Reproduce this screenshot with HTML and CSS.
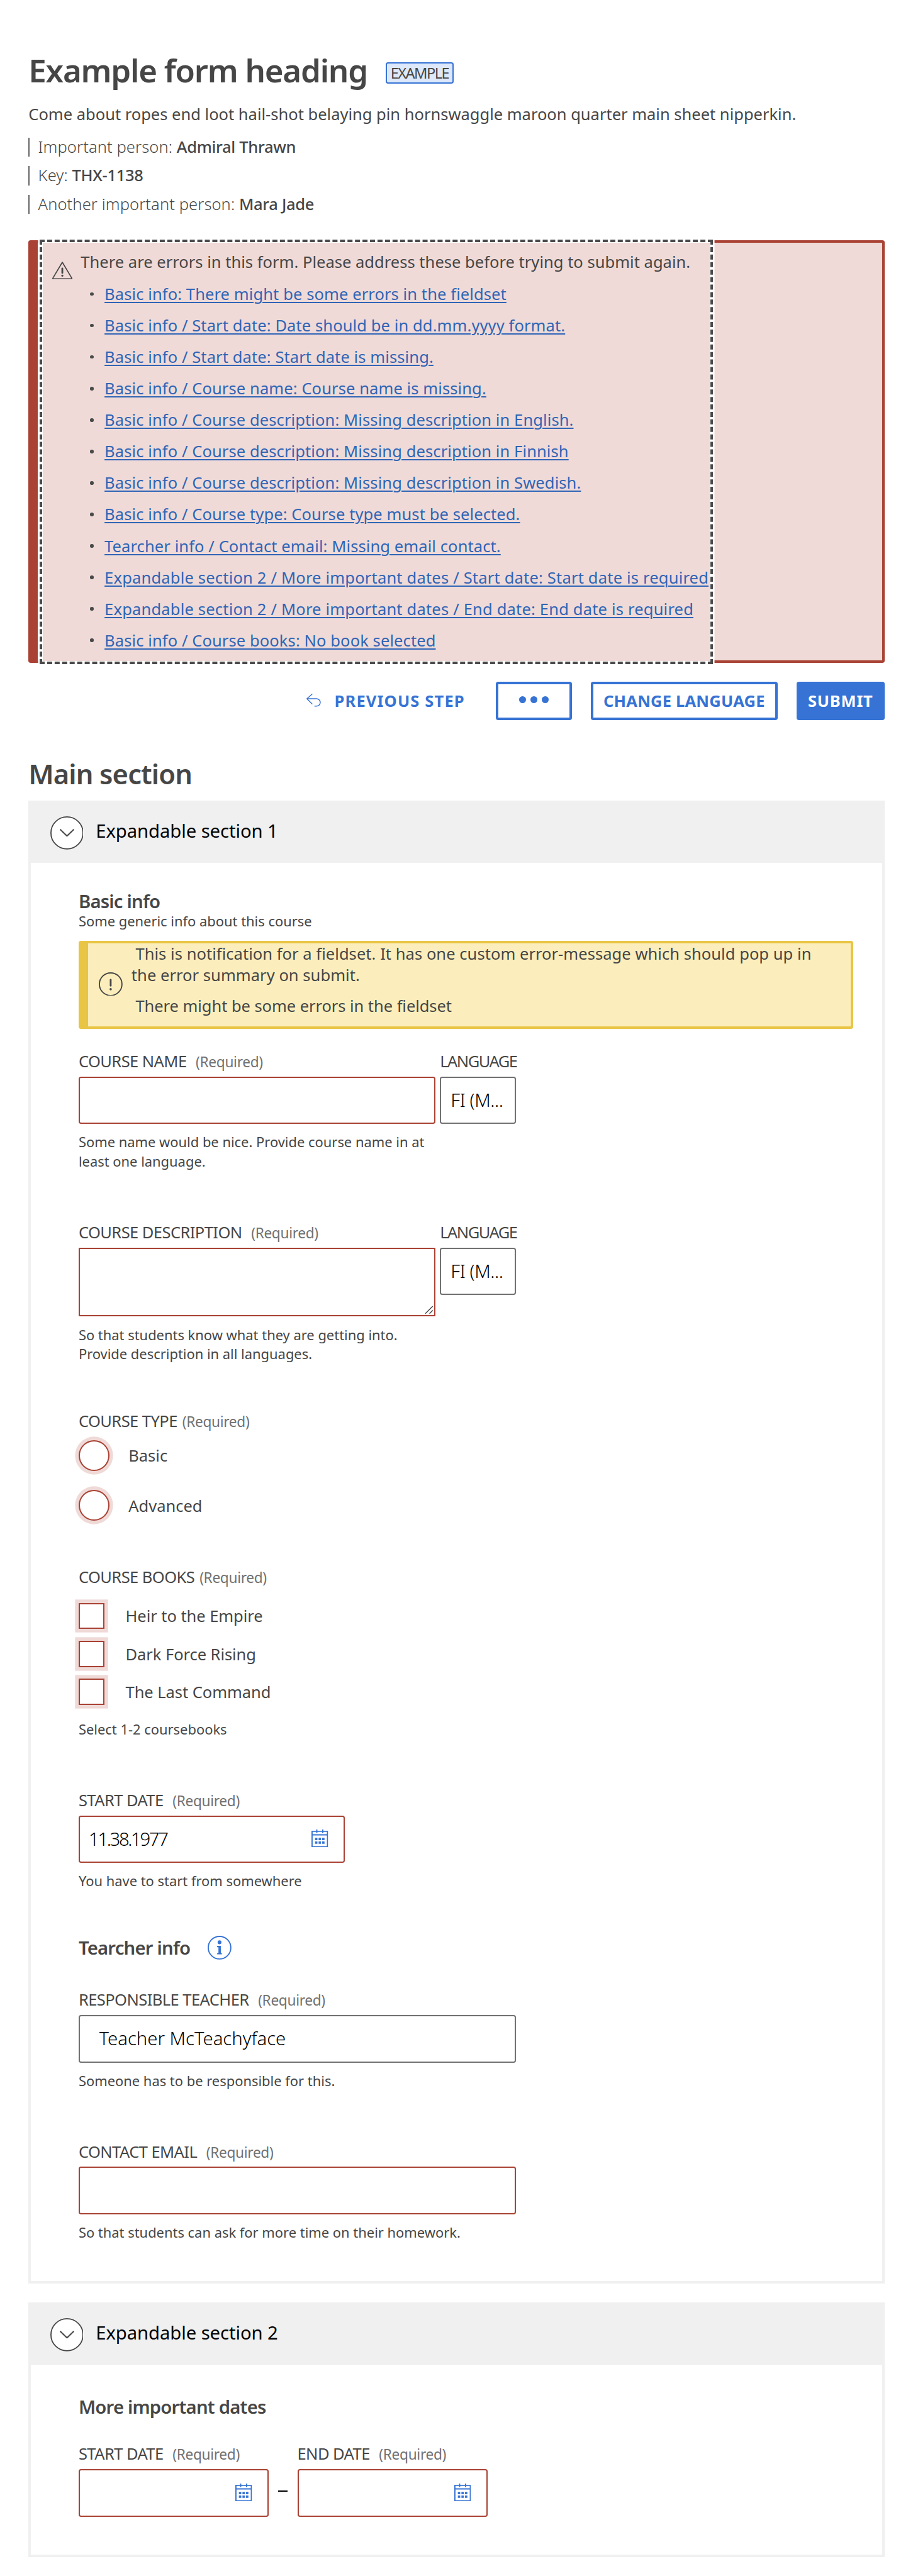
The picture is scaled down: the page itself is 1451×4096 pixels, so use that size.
FILE: index.html
```html
<!DOCTYPE html>
<html lang="en">
<head>
<meta charset="utf-8">
<title>Example form heading</title>
<link rel="stylesheet" href="styles.css">
</head>
<body>
<svg class="sprite" aria-hidden="true">
  <symbol id="calendar" viewBox="0 0 28 30">
    <path d="M1 3h26v26H1zM1 9h26" fill="none" stroke="currentColor" stroke-width="2"/>
    <path d="M9 0v6M19 0v6" fill="none" stroke="currentColor" stroke-width="2"/>
    <path d="M6 14h4v4H6zM12 14h4v4h-4zM18 14h4v4h-4zM6 20h4v4H6zM12 20h4v4h-4zM18 20h4v4h-4z" fill="currentColor"/>
  </symbol>
  <symbol id="chevron" viewBox="0 0 56 56">
    <circle cx="28" cy="28" r="27" fill="#fff" stroke="currentColor" stroke-width="1.9"/>
    <path d="M17 22.5l11 10.5 11-10.5" fill="none" stroke="currentColor" stroke-width="2.2" stroke-linecap="round" stroke-linejoin="round"/>
  </symbol>
</svg>
<main class="page">
  <header class="title-row">
    <h1 class="title">Example form heading</h1>
    <span class="tag">EXAMPLE</span>
  </header>
  <p class="lead">Come about ropes end loot hail-shot belaying pin hornswaggle maroon quarter main sheet nipperkin.</p>
  <ul class="meta">
    <li class="meta-item">Important person: <b class="meta-value">Admiral Thrawn</b></li>
    <li class="meta-item">Key: <b class="meta-value">THX-1138</b></li>
    <li class="meta-item">Another important person: <b class="meta-value">Mara Jade</b></li>
  </ul>

  <section class="errors">
    <div class="errors-focus">
      <svg class="errors-icon" viewBox="0 0 34 30"><path d="M17 1L33 28q.3 1-.8 1H1.800q-1.100 0-.8-1z" fill="none" stroke="currentColor" stroke-width="1.800" stroke-linejoin="round"/><path d="M17 11.500v7.500" stroke="currentColor" stroke-width="3" stroke-linecap="round"/><circle cx="17" cy="23.600" r="1.700" fill="currentColor"/></svg>
      <div class="errors-body">
        <p class="errors-title">There are errors in this form. Please address these before trying to submit again.</p>
        <ul class="errors-list">
          <li><a class="link" href="#">Basic info: There might be some errors in the fieldset</a></li>
          <li><a class="link" href="#">Basic info / Start date: Date should be in dd.mm.yyyy format.</a></li>
          <li><a class="link" href="#">Basic info / Start date: Start date is missing.</a></li>
          <li><a class="link" href="#">Basic info / Course name: Course name is missing.</a></li>
          <li><a class="link" href="#">Basic info / Course description: Missing description in English.</a></li>
          <li><a class="link" href="#">Basic info / Course description: Missing description in Finnish</a></li>
          <li><a class="link" href="#">Basic info / Course description: Missing description in Swedish.</a></li>
          <li><a class="link" href="#">Basic info / Course type: Course type must be selected.</a></li>
          <li><a class="link" href="#">Tearcher info / Contact email: Missing email contact.</a></li>
          <li><a class="link link-long" href="#">Expandable section 2 / More important dates / Start date: Start date is required</a></li>
          <li><a class="link link-long" href="#">Expandable section 2 / More important dates / End date: End date is required</a></li>
          <li><a class="link" href="#">Basic info / Course books: No book selected</a></li>
        </ul>
      </div>
    </div>
  </section>

  <div class="actions">
    <a class="back" href="#"><svg class="back-icon" viewBox="0 0 24 22"><path d="M9.500 .8L.8 8.500l8.700 8.700M.8 8.500H17a6.200 6.200 0 0 1 0 12.500h-3" fill="none" stroke="currentColor" stroke-width="1.500" stroke-linecap="round"/></svg>PREVIOUS STEP</a>
    <button class="btn btn-more" type="button"><i class="dot"></i><i class="dot"></i><i class="dot"></i></button>
    <button class="btn btn-lang" type="button">CHANGE LANGUAGE</button>
    <button class="btn btn-submit" type="button">SUBMIT</button>
  </div>

  <h2 class="section-title">Main section</h2>

  <section class="panel">
    <header class="panel-head"><svg class="panel-icon"><use href="#chevron"/></svg><h3 class="panel-title">Expandable section 1</h3></header>
    <div class="panel-body">
      <h4 class="legend">Basic info</h4>
      <p class="legend-note">Some generic info about this course</p>
      <div class="notice">
        <svg class="notice-icon" viewBox="0 0 40 40"><circle cx="20" cy="20" r="19" fill="none" stroke="currentColor" stroke-width="2"/><path d="M20 12.500v10" stroke="currentColor" stroke-width="3" stroke-linecap="round"/><circle cx="20" cy="28.500" r="1.900" fill="currentColor"/></svg>
        <div class="notice-body">
          <p class="notice-text">This is notification for a fieldset. It has one custom error-message which should pop up in the error summary on submit.</p>
          <p class="notice-text">There might be some errors in the fieldset</p>
        </div>
      </div>

      <div class="field field-name">
        <div class="col-main">
          <label class="label">COURSE NAME <span class="req">(Required)</span></label>
          <input class="input invalid" type="text">
          <p class="hint">Some name would be nice. Provide course name in at least one language.</p>
        </div>
        <div class="col-lang">
          <label class="label">LANGUAGE</label>
          <div class="select">FI (M...</div>
        </div>
      </div>

      <div class="field field-description">
        <div class="col-main">
          <label class="label">COURSE DESCRIPTION <span class="req">(Required)</span></label>
          <div class="textarea"><svg class="grip" viewBox="0 0 14 14"><path d="M1 13.500L13.500 1M8 13.500l5.500-5.500" stroke="currentColor" stroke-width="1.500" fill="none"/></svg></div>
          <p class="hint">So that students know what they are getting into. Provide description in all languages.</p>
        </div>
        <div class="col-lang">
          <label class="label">LANGUAGE</label>
          <div class="select">FI (M...</div>
        </div>
      </div>

      <div class="group group-type">
        <p class="label tight">COURSE TYPE <span class="req">(Required)</span></p>
        <label class="radio"><i class="radio-mark"></i>Basic</label>
        <label class="radio"><i class="radio-mark"></i>Advanced</label>
      </div>

      <div class="group group-books">
        <p class="label tight">COURSE BOOKS <span class="req">(Required)</span></p>
        <label class="check"><i class="check-mark"></i>Heir to the Empire</label>
        <label class="check"><i class="check-mark"></i>Dark Force Rising</label>
        <label class="check"><i class="check-mark"></i>The Last Command</label>
        <p class="hint">Select 1-2 coursebooks</p>
      </div>

      <div class="stack">
        <label class="label">START DATE <span class="req">(Required)</span></label>
        <div class="input date invalid"><span class="date-value">11.38.1977</span><svg class="calendar"><use href="#calendar"/></svg></div>
        <p class="hint">You have to start from somewhere</p>
      </div>

      <div class="legend-row">
        <h4 class="legend">Tearcher info</h4>
        <svg class="info" viewBox="0 0 40 40"><circle cx="20" cy="20" r="19" fill="none" stroke="currentColor" stroke-width="2"/><circle cx="20" cy="11" r="3.200" fill="currentColor"/><path d="M16 17h6.200v12H24v2.200h-8V29h2.200v-9.800H16z" fill="currentColor"/></svg>
      </div>

      <div class="stack stack-first">
        <label class="label">RESPONSIBLE TEACHER <span class="req">(Required)</span></label>
        <input class="input wide teacher" type="text" value="Teacher McTeachyface">
        <p class="hint">Someone has to be responsible for this.</p>
      </div>
      <div class="stack">
        <label class="label">CONTACT EMAIL <span class="req">(Required)</span></label>
        <input class="input wide invalid" type="text">
        <p class="hint">So that students can ask for more time on their homework.</p>
      </div>
    </div>
  </section>

  <section class="panel panel-second">
    <header class="panel-head"><svg class="panel-icon"><use href="#chevron"/></svg><h3 class="panel-title">Expandable section 2</h3></header>
    <div class="panel-body">
      <h4 class="legend">More important dates</h4>
      <div class="range">
        <div>
          <label class="label">START DATE <span class="req">(Required)</span></label>
          <div class="input date short invalid"><svg class="calendar"><use href="#calendar"/></svg></div>
        </div>
        <span class="range-dash"></span>
        <div>
          <label class="label">END DATE <span class="req">(Required)</span></label>
          <div class="input date short invalid"><svg class="calendar"><use href="#calendar"/></svg></div>
        </div>
      </div>
    </div>
  </section>
</main>
</body>
</html>
```
FILE: styles.css
```css
html { font-size: 9.4466px; }
*, *::before, *::after { box-sizing: border-box; }
body {
  margin: 0;
  background: #fff;
  color: #464646;
  font-family: "Noto Sans", "Open Sans", sans-serif;
  font-size: 2.7rem;
  font-weight: 430;
}
h1, h2, h3, h4, p, ul { margin: 0; padding: 0; }
ul { list-style: none; }
button, input { font-family: inherit; }
.sprite { position: absolute; width: 0; height: 0; }
.page { padding: 8.1rem 4.8rem 0; height: 433.6rem; }

/* Heading */
.title-row { display: flex; align-items: flex-start; }
.title {
  width: 60.1rem;
  font-size: 5.4rem;
  line-height: 7.2rem;
  font-weight: 600;
  letter-spacing: -.024em;
  white-space: nowrap;
}
.tag {
  margin-top: 2.4rem;
  width: 11.400rem;
  height: 3.6rem;
  border: 2px solid #3673d4;
  border-radius: .4rem;
  background: #dde9fb;
  font-size: 2.5rem;
  line-height: 3.2rem;
  letter-spacing: -.065em;
  text-align: center;
}
.lead { margin-top: 1.95rem; line-height: 4rem; white-space: nowrap; }
.meta { margin-top: 1.95rem; display: grid; gap: 1.6rem; }
.meta-item {
  height: 3.2rem;
  padding-left: 1.400rem;
  border-left: 2px solid #666;
  line-height: 3rem;
  font-weight: 350;
  letter-spacing: .004em;
}
.meta-value { font-weight: 530; letter-spacing: -.012em; }

/* Error summary */
.errors {
  margin-top: 4.4rem;
  height: 71.2rem;
  border: 4px solid #a94234;
  border-left-width: 1.6rem;
  border-radius: .4rem;
  background: #efdad8;
}
.errors-focus {
  display: flex;
  align-items: flex-start;
  margin-left: .8rem;
  width: 112.200rem;
  height: 70.400rem;
  background: #efdad8;
  box-shadow: 0 0 0 .8rem #fff;
  outline: 4px dashed #4a4a4a;
  outline-offset: .2rem;
}
.errors-icon { flex: none; width: 3.4rem; height: 3rem; margin: 3.2rem 0 0 1.6rem; }
.errors-body { margin-left: 1.4rem; white-space: nowrap; letter-spacing: .004em; }
.errors-title { margin-top: 1.35rem; line-height: 4rem; font-size: 2.7rem; letter-spacing: .001em; }
.errors-list { margin-top: .63rem; }
.errors-list li { position: relative; padding-left: 4rem; line-height: 5.3rem; }
.errors-list li::before {
  content: "";
  position: absolute;
  left: 1.6rem;
  top: 2.4rem;
  width: .6rem;
  height: .6rem;
  border-radius: 50%;
  background: #4a4a4a;
}
.link { color: #2f65b6; text-decoration-thickness: 2px; text-underline-offset: .3rem; }
.link-long { letter-spacing: .0075em; }

/* Actions */
.actions { display: flex; justify-content: flex-end; margin-top: 3.2rem; height: 6.400rem; }
.back {
  display: flex;
  align-items: center;
  margin-right: 5.2rem;
  padding-bottom: .2rem;
  color: #3673d4;
  font-weight: 700;
  letter-spacing: .045em;
  text-decoration: none;
}
.back-icon { width: 2.4rem; height: 2.2rem; margin-right: 2.3rem; }
.btn {
  display: flex;
  align-items: center;
  justify-content: center;
  padding: 0 0 .2rem;
  border: 4px solid #3673d4;
  border-radius: .4rem;
  background: #fff;
  color: #3673d4;
  font-size: 2.7rem;
  font-weight: 700;
  letter-spacing: .008em;
  white-space: nowrap;
}
.btn-more { width: 12.8rem; gap: .7rem; padding-bottom: .4rem; }
.dot { width: 1.2rem; height: 1.2rem; border-radius: 50%; background: currentColor; }
.btn-lang { width: 31.400rem; margin-left: 3.2rem; }
.btn-submit { width: 14.800rem; margin-left: 3.2rem; background: #3673d4; color: #fff; letter-spacing: .03em; }

.section-title {
  margin-top: 6.15rem;
  font-size: 4.6rem;
  line-height: 6rem;
  font-weight: 600;
  letter-spacing: -.02em;
}

/* Expandable panels */
.panel { margin-top: 1.45rem; height: 249.600rem; border: 4px solid #f0f0f0; }
.panel-second { margin-top: 3.2rem; height: 42.8rem; }
.panel-head { display: flex; height: 10rem; background: #f0f0f0; }
.panel-icon { width: 5.6rem; height: 5.6rem; margin: 2.2rem 0 0 3.2rem; }
.panel-title {
  margin: 2.7rem 0 0 2.1rem;
  color: #000;
  font-size: 3.1rem;
  line-height: 4rem;
  font-weight: 430;
  letter-spacing: -.003em;
}
.panel-body { padding: 4.6rem 4.8rem 0 8rem; }
.legend { padding-top: .1rem; font-size: 3.1rem; line-height: 3.8rem; height: 3.8rem; font-weight: 630; letter-spacing: -.027em; }
.legend-note { font-size: 2.32rem; line-height: 3rem; }

.notice {
  display: flex;
  margin-top: 1.8rem;
  height: 14.8rem;
  border: 4px solid #e9c545;
  border-left-width: 1.6rem;
  border-radius: .4rem;
  background: #fbeebc;
}
.notice-icon { flex: none; align-self: center; width: 4rem; height: 4rem; margin: -.4rem 1.5rem 0 1.8rem; }
.notice-body { width: 116rem; margin-top: -.15rem; line-height: 3.6rem; letter-spacing: .002em; }
.notice-text { text-indent: .7rem; }
.notice-text + .notice-text { margin-top: 1.6rem; letter-spacing: -.002em; }

/* Fields */
.label { display: block; height: 3.2rem; line-height: 3.2rem; letter-spacing: -.022em; white-space: nowrap; }
.col-lang .label { letter-spacing: -.06em; }
.req { margin-left: .9rem; color: #717171; font-size: 2.4rem; letter-spacing: -.014em; }
.tight .req { margin-left: .2rem; }
.input {
  display: block;
  margin: 1rem 0 0;
  width: 100%;
  height: 8rem;
  border: 2px solid #717171;
  border-radius: .4rem;
  background: #fff;
  color: #000;
  font-size: 3.1rem;
  font-weight: 300;
}
.input.invalid { border-color: #a94234; }
.input.wide { width: 73.6rem; }
.teacher { padding: 0 0 .2rem 3.25rem; }
.hint { margin-top: 1.5rem; font-size: 2.32rem; line-height: 3.2rem; }
.field { display: flex; gap: .8rem; }
.field-name { margin-top: 3.8rem; }
.field-description { margin-top: 8.7rem; }
.col-main { width: 60rem; }
.col-lang { width: 12.8rem; }
.select {
  margin-top: 1rem;
  height: 8rem;
  padding-left: 1.600rem;
  border: 2px solid #717171;
  border-radius: .4rem;
  color: #000;
  font-size: 3.1rem;
  line-height: 7.5rem;
  font-weight: 300;
  letter-spacing: -.015em;
  white-space: nowrap;
}
.textarea {
  display: flex;
  align-items: flex-end;
  justify-content: flex-end;
  margin-top: 1rem;
  height: 11.6rem;
  padding: .2rem;
  border: 2px solid #a94234;
}
.grip { width: 1.4rem; height: 1.4rem; }

.group-type { margin-top: 8rem; }
.group-books { margin-top: 7.85rem; }
.radio, .check { display: flex; align-items: center; }
.radio { margin-top: 1.7rem; height: 5.2rem; }
.radio + .radio { margin-top: 3.2rem; }
.radio-mark, .check-mark { border: 2px solid #a94234; background: #fff; box-shadow: 0 0 0 .6rem #efdad8; }
.radio-mark { width: 5.2rem; height: 5.2rem; margin-right: 3.2rem; border-radius: 50%; }
.check { margin-top: 2.75rem; height: 4.4rem; letter-spacing: -.002em; }
.check + .check { margin-top: 2rem; }
.check-mark { width: 4.4rem; height: 4.4rem; margin-right: 3.5rem; }
.group-books .hint { margin-top: 2.56rem; }

.stack { margin-top: 8.64rem; }
.stack-first { margin-top: 5.1rem; }
.input.date {
  display: flex;
  align-items: center;
  width: 44.800rem;
  padding: 0 2.6rem .200rem 1.5rem;
}
.date-value { letter-spacing: -.08em; }
.calendar { width: 2.8rem; height: 3rem; margin-left: auto; color: #3673d4; }
.legend-row { display: flex; align-items: center; margin-top: 7.6rem; height: 4rem; }
.info { width: 4rem; height: 4rem; margin-left: 2.5rem; color: #3673d4; }
.legend-row .legend { width: 19.200rem; white-space: nowrap; }

.panel-second .panel-body { padding-top: 5.2rem; }
.range { display: flex; margin-top: 4.4rem; }
.range .input.date { width: 32rem; }
.range-dash { width: 1.6rem; height: .2rem; margin: 7.8rem 1.6rem 0; background: #000; }
```
